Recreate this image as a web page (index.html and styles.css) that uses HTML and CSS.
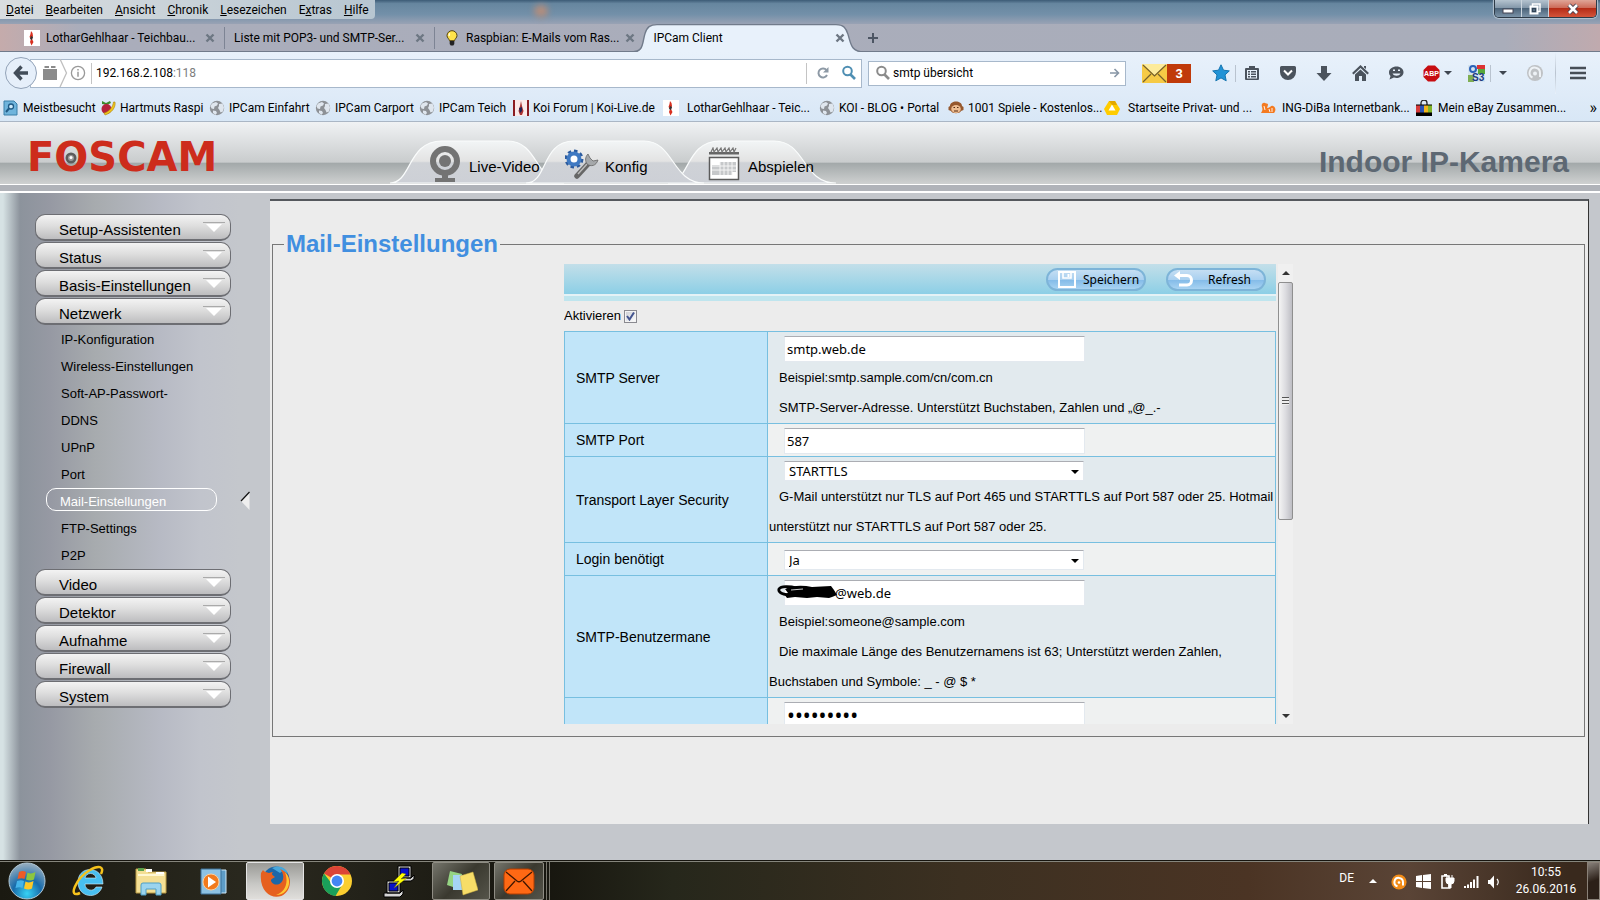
FILE: index.html
```html
<!DOCTYPE html>
<html lang="de">
<head>
<meta charset="utf-8">
<title>IPCam Client</title>
<link rel="stylesheet" href="styles.css">
</head>
<body>
<svg class="defs" aria-hidden="true">
  <symbol id="globe" viewBox="0 0 16 16"><circle cx="8" cy="8" r="7.200" fill="#8d9196"/><path d="M3 3.500 7 2l2 1.500-1 2-2.500 1L5 9l-2.500-.5L1.500 6zM10 4l3.500-.5 1.500 4-1 4-2.500 1-1-2.500-1.500-2 1-2zM4 10.500l3 .5 1 2-1.500 1.800L4 13z" fill="#dfe6ee"/></symbol>
  <symbol id="close" viewBox="0 0 10 10"><path d="M1.500 1.500l7 7M8.500 1.500l-7 7" stroke="#6d7783" stroke-width="2.400"/></symbol>
  <symbol id="koi" viewBox="0 0 16 16"><path fill="#fff" d="M0 0h16v16H0z"/><path d="M7 1l1.500 2 .5 3-1 3 1.500 3-2 3.500L6 12l1-3-1.500-2 1-3z" fill="#d83020"/><path d="M7 6l2 1-1 3-2-1z" fill="#333"/></symbol>
  <symbol id="lens" viewBox="0 0 16 16"><circle cx="6.500" cy="6" r="4.300" fill="none" stroke="currentColor" stroke-width="2"/><path d="M9.500 9.500l4.500 4.500" stroke="currentColor" stroke-width="2.600"/></symbol>
  <symbol id="drop" viewBox="0 0 22 12"><path d="M0 .5h22" stroke="#aaa"/><path d="M3 2h16l-8 8z" fill="#fff"/></symbol>
</svg>

<header class="browser">
  <div class="titlebar">
    <nav class="menubar" aria-label="Menü">
      <a href="#"><u>D</u>atei</a><a href="#"><u>B</u>earbeiten</a><a href="#"><u>A</u>nsicht</a><a href="#"><u>C</u>hronik</a><a href="#"><u>L</u>esezeichen</a><a href="#">E<u>x</u>tras</a><a href="#"><u>H</u>ilfe</a>
    </nav>
    <span class="glow"></span>
    <div class="winbtns">
      <button class="wb-min" aria-label="Minimieren"><svg width="12" height="12"><rect x="1" y="6" width="10" height="4" fill="#fff" stroke="#445"/></svg></button>
      <button class="wb-max" aria-label="Wiederherstellen"><svg width="12" height="12" fill="none"><path d="M3.500 3V1h7.500v7.500H9" stroke="#fff" stroke-width="1.500"/><rect x="1.500" y="3.500" width="7" height="7" stroke="#fff" stroke-width="2"/><rect x="3.500" y="5.500" width="3" height="3" stroke="#345"/></svg></button>
      <button class="wb-close" aria-label="Schließen"><svg width="14" height="12"><path d="M3 2l8 8M11 2l-8 8" stroke="#454050" stroke-width="4.500"/><path d="M3 2l8 8M11 2l-8 8" stroke="#fff" stroke-width="2.600"/></svg></button>
    </div>
  </div>

  <div class="tabs">
    <div class="tab"><svg class="i16"><use href="#koi"/></svg><span>LotharGehlhaar - Teichbau...</span><button aria-label="Tab schließen"><svg class="i10"><use href="#close"/></svg></button></div>
    <div class="tab"><span>Liste mit POP3- und SMTP-Ser...</span><button aria-label="Tab schließen"><svg class="i10"><use href="#close"/></svg></button></div>
    <div class="tab last"><svg class="i16" viewBox="0 0 16 16"><path d="M8 .7a5 5 0 0 0-5 5c0 2 2.200 3.200 2.500 5h5c.3-1.800 2.500-3 2.500-5a5 5 0 0 0-5-5z" fill="#ffe34a" stroke="#55430c"/><path d="M6 3.500c-1 .6-1 1.800-.8 2.500" stroke="#fff" fill="none" stroke-width="1.300"/><path d="M5.700 11h4.600v3l-1 1.500H6.700l-1-1.500z" fill="#222"/></svg><span>Raspbian: E-Mails vom Ras...</span><button aria-label="Tab schließen"><svg class="i10"><use href="#close"/></svg></button></div>
    <div class="tab active"><svg class="tabshape" viewBox="0 0 236 30" preserveAspectRatio="none"><path d="M0 29.500C12 29.500 10 20 13 10 15 3 18 .7 25 .7H204c8 0 10 4 12 10 3 10 3 18.800 16 18.800h4V30H0z" fill="#e8f1fb"/><path d="M0 28.800C12 28.800 10 20 13 10 15 3 18 .7 25 .7H204c8 0 10 4 12 10 3 10 3 18.100 16 18.100h4" fill="none" stroke="#717b8b" stroke-width="1.400"/></svg><span>IPCam Client</span><button aria-label="Tab schließen"><svg class="i10"><use href="#close"/></svg></button></div>
    <button class="newtab" aria-label="Neuer Tab"><svg width="12" height="12"><path d="M6 1v10M1 6h10" stroke="#4c5563" stroke-width="2"/></svg></button>
  </div>

  <div class="toolbar">
    <button class="back" aria-label="Zurück"><svg width="16" height="16" viewBox="0 0 16 16"><path d="M8.500 1.500L2.500 8l6 6.500M3 8h12" fill="none" stroke="#424d59" stroke-width="3.400"/></svg></button>
    <div class="url">
      <svg width="54" height="28" viewBox="0 0 54 28" aria-hidden="true"><path d="M5 10h14v11H5zM6.500 7H11v2H6.500zM13 7h4.500v2H13z" fill="#8b8b8b"/><path d="M22 0l6.500 14L22 28" fill="none" stroke="#bfbfbf" stroke-width="1.300"/><circle cx="40" cy="14" r="6.600" fill="none" stroke="#999" stroke-width="1.300"/><path d="M40 12.800v5M40 10v1.500" stroke="#999" stroke-width="1.500"/><path d="M53.500 4v21" stroke="#c4c4c4"/></svg>
      <a href="#" class="address">192.168.2.108<i>:118</i></a>
      <button class="reload" aria-label="Neu laden"><svg width="14" height="14" viewBox="0 0 14 14"><path d="M10.500 4.200A4.500 4.500 0 1 0 11 9" fill="none" stroke="#8d99a5" stroke-width="2"/><path d="M12.500 1v5.500H7z" fill="#8d99a5"/></svg></button>
      <button class="go" aria-label="Suchen"><svg class="i16"><use href="#lens"/></svg></button>
    </div>
    <div class="search">
      <svg class="i16"><use href="#lens"/></svg>
      <input type="text" aria-label="Suche" value="smtp übersicht">
      <svg width="10" height="10" viewBox="0 0 10 10"><path d="M0 5h8M4.500 1l4 4-4 4" fill="none" stroke="#8896a6" stroke-width="1.600"/></svg>
    </div>
    <button class="mail" aria-label="3 neue Nachrichten"><svg width="25" height="19" viewBox="0 0 25 19"><path fill="#f6ca45" d="M0 0h25v19H0z"/><path fill="#fdeb9b" d="M0 0h25L12.500 11z"/><path d="M1 1l11.500 11L24 1M1 18l8-8M24 18l-8-8" fill="none" stroke="#74602c" stroke-width="1.200"/></svg><b>3</b></button>
    <button class="tb star" aria-label="Lesezeichen"><svg width="18" height="18" viewBox="0 0 18 18"><path d="M9 .8l2.500 5.400 5.800.7-4.300 4 1.200 5.900L9 13.900l-5.200 2.900L5 10.900l-4.300-4 5.800-.7z" fill="#2193d6" stroke="#1675b0"/></svg></button>
    <span class="sep"></span>
    <button class="tb clip" aria-label="Lesezeichenliste"><svg width="16" height="16" viewBox="0 0 16 16"><path d="M2 3h3V1h6v2h3a1 1 0 0 1 1 1v10a1 1 0 0 1-1 1H2a1 1 0 0 1-1-1V4a1 1 0 0 1 1-1z" fill="#4b535d"/><path d="M3 5h10v8.500H3z" fill="#e8f1fb"/><path d="M4 6h2v1.500H4zm3 0h5v1.500H7zM4 8.500h2V10H4zm3 0h5V10H7zM4 11h2v1.500H4zm3 0h5v1.500H7z" fill="#4b535d"/></svg></button>
    <button class="tb" aria-label="Pocket"><svg width="18" height="16" viewBox="0 0 18 16"><path d="M2.500 1h13a1.500 1.500 0 0 1 1.500 1.500V7a8 8 0 0 1-16 0V2.500A1.500 1.500 0 0 1 2.500 1z" fill="#4b535d"/><path d="M5 5.500l4 4 4-4" fill="none" stroke="#fff" stroke-width="2"/></svg></button>
    <button class="tb" aria-label="Downloads"><svg width="16" height="17" viewBox="0 0 16 17"><path d="M5 1h6v7h4.500L8 16 .5 8H5z" fill="#4b535d"/></svg></button>
    <button class="tb" aria-label="Startseite"><svg width="17" height="16" viewBox="0 0 17 16"><path d="M.8 8.800L8.500 1.500l7.700 7.300" fill="none" stroke="#4b535d" stroke-width="2.200"/><path d="M12 1h2v3l-2-1.500zM3 9.500L8.500 4.500 14 9.500V16h-4v-5H7v5H3z" fill="#4b535d"/></svg></button>
    <button class="tb" aria-label="Chat"><svg width="16" height="16" viewBox="0 0 16 16"><path d="M8.500 1.500c4 0 7 2.500 7 5.700s-3 5.800-7 5.800c-1 0-1.800-.1-2.600-.4L1.500 14.500l1-3.500C1.500 10 1 8.900 1 7.200c0-3.200 3.500-5.700 7.500-5.700z" fill="#4b535d"/><path d="M5 4.500h2V6H5zM10 4.500h2V6h-2z" fill="#e8f1fb"/><path d="M4.500 8.500c1.500 3 6.500 3 8 0z" fill="#e8f1fb"/></svg></button>
    <button class="tb abp" aria-label="Adblock Plus"><svg width="17" height="17" viewBox="0 0 17 17"><path d="M5 .5h7L16.500 5v7L12 16.500H5L.5 12V5z" fill="#c70d11"/><text x="8.500" y="11.400" text-anchor="middle" class="abptxt">ABP</text></svg></button>
    <span class="caret"></span>
    <button class="tb s3" aria-label="Google S3 Übersetzer"><svg width="17" height="17" viewBox="0 0 17 17"><path fill="#d5e3ef" d="M0 0h17v17H0z"/><path d="M9 0h8v4H9z" fill="#d33"/><path d="M10 4h7v5h-7z" fill="#57a73a"/><path d="M0 10h6v7H0z" fill="#7fae52"/><circle cx="5" cy="4" r="3" fill="none" stroke="#2b62b8" stroke-width="2"/><text x="4" y="16" class="s3txt">S3</text></svg></button>
    <span class="sep"></span>
    <span class="caret wide"></span>
    <button class="tb at" aria-label="Avast"><svg width="18" height="18" viewBox="0 0 18 18"><circle cx="9" cy="9" r="8" fill="#bfc2c5"/><path d="M6.500 13.500A5.200 5.200 0 1 1 14 9v4" fill="none" stroke="#eef2f6" stroke-width="2"/><circle cx="9" cy="9.500" r="2" fill="#eef2f6"/></svg></button>
    <span class="sep tall"></span>
    <button class="tb burger" aria-label="Menü öffnen"><svg width="16" height="14"><path d="M0 2h16M0 7h16M0 12h16" stroke="#474e57" stroke-width="2.600"/></svg></button>
  </div>

  <nav class="bookmarks" aria-label="Lesezeichen">
    <a href="#" class="b97"><svg class="i16" viewBox="0 0 16 16"><path d="M1 1h10l3 3v11H1z" fill="#6fb4dc" stroke="#3b7fa8"/><circle cx="8" cy="6.500" r="2.500" fill="#cdeaf9" stroke="#205a85" stroke-width="1.300"/><path d="M6 8.500L3 12" stroke="#205a85" stroke-width="2"/></svg><span>Meistbesucht</span></a>
    <a href="#" class="b109"><svg class="i16" viewBox="0 0 16 16"><path d="M2 1l4 2 4-2 1 2-4 2-5-1z" fill="#3d8a2b"/><circle cx="6.500" cy="9" r="5" fill="#b5213c"/><path d="M15 2c1 5-3 11-10 13l-1-2c5-1 9-6 9.500-11z" fill="#f0c51d" stroke="#a8820b" stroke-width=".6"/></svg><span>Hartmuts Raspi</span></a>
    <a href="#" class="b106"><svg class="i16"><use href="#globe"/></svg><span>IPCam Einfahrt</span></a>
    <a href="#" class="b104"><svg class="i16"><use href="#globe"/></svg><span>IPCam Carport</span></a>
    <a href="#" class="b94"><svg class="i16"><use href="#globe"/></svg><span>IPCam Teich</span></a>
    <a href="#" class="b150"><svg class="i16" viewBox="0 0 16 16"><path fill="#fbe9e9" d="M0 0h16v16H0z"/><path fill="#8b1c22" d="M0 0h2v16H0zM14 0h2v16h-2z"/><path d="M8 1l1 5 1.500 5L9 15H7l-1.500-4L7 6z" fill="#a33"/><path d="M6 8l3-1v4l-2 2z" fill="#225"/></svg><span>Koi Forum | Koi-Live.de</span></a>
    <a href="#" class="b156 g8"><svg class="i16"><use href="#koi"/></svg><span>LotharGehlhaar - Teic...</span></a>
    <a href="#" class="b129"><svg class="i16"><use href="#globe"/></svg><span>KOI - BLOG • Portal</span></a>
    <a href="#" class="b156"><svg class="i16" viewBox="0 0 16 16"><path d="M2 6c0-3 3-4.500 6-4.500S14 3 14 6l1.500 1v3L13 11c-1 3-9 3-10 0L.5 10V7z" fill="#96582d"/><ellipse cx="8" cy="9" rx="4.800" ry="4" fill="#eebd91"/><path d="M5.500 7.500h1.500M9 7.500h1.500M6 11h4" stroke="#532b12" stroke-width="1.200"/></svg><span>1001 Spiele - Kostenlos...</span></a>
    <a href="#" class="b156 g8"><svg class="i16" viewBox="0 0 16 16"><path d="M5 1h6l5 8-3 6H3L0 9z" fill="#fc0"/><path d="M8 4.500l3.500 6h-7z" fill="#fff"/><path d="M5 1h6l2 4H8z" fill="#e3a800"/></svg><span>Startseite Privat- und ...</span></a>
    <a href="#" class="b156 g6"><svg class="i16" viewBox="0 0 16 16"><path d="M1 13c1-2 2-3 1-6-1-3 1-5 3-4s3 0 3 2l-1 3c3 0 4-3 6-2 3 1 3 5 1 7z" fill="#f47a20"/><path d="M4 6l1 4M9 9l1 3M12 8v4" stroke="#fff" stroke-width=".9"/></svg><span>ING-DiBa Internetbank...</span></a>
    <a href="#" class="b171 g6"><svg class="i16" viewBox="0 0 16 16"><path d="M5 5V3a3 3 0 0 1 6 0v2" fill="none" stroke="#222" stroke-width="1.300"/><path d="M0 5h4v8H0z" fill="#d63a3a"/><path d="M4 5h4v8H4z" fill="#2a52b5"/><path d="M8 5h4v8H8z" fill="#f0b41c"/><path d="M12 5h4v8h-4z" fill="#80b52a"/><path d="M0 4.500h16v1H0zM0 12.500h16V16H0z"/></svg><span>Mein eBay Zusammen...</span></a>
    <button class="more" aria-label="Weitere Lesezeichen">»</button>
  </nav>
</header>

<div class="page">
  <header class="camhead">
    <a href="#" class="logo" aria-label="FOSCAM">F<span class="eyeo">O<svg viewBox="0 0 12 12"><circle cx="6" cy="6" r="5.500" fill="#5c5c5c"/><circle cx="6" cy="6" r="3" fill="#999"/><circle cx="6" cy="5.500" r="1.500" fill="#fff"/></svg></span>SCAM</a>
    <nav class="camnav" aria-label="Kamera">
      <svg class="tabsbg" viewBox="0 0 450 44" preserveAspectRatio="none" aria-hidden="true">
        <defs><linearGradient id="tg" x1="0" y1="0" x2="0" y2="1"><stop offset="0" stop-color="#f2f5f6"/><stop offset=".48" stop-color="#e3e3e3"/><stop offset=".52" stop-color="#cfd2d7"/><stop offset="1" stop-color="#cdd0d6"/></linearGradient></defs>
        <g fill="url(#tg)" stroke="#fafcfc" stroke-width="1.200">
          <path d="M0 43C22 43 17 1 52 1h66c30 0 28 42 56 42z"/>
          <path d="M278 43C300 43 295 1 330 1h54c32 0 28 42 62 42z"/>
          <path d="M136 43C158 43 151 1 184 1h70c30 0 28 42 60 42z"/>
        </g>
      </svg>
      <a href="#" class="n1"><svg width="32" height="38" viewBox="0 0 32 38"><circle cx="16" cy="16" r="12" fill="none" stroke="#737373" stroke-width="6"/><circle cx="16" cy="16" r="6" fill="#737373"/><path d="M13 29h6v4h7v4H6v-4h7z" fill="#737373"/></svg><span>Live-Video</span></a>
      <a href="#" class="n2"><svg width="34" height="30" viewBox="0 0 34 30"><circle cx="9" cy="10" r="8.200" fill="none" stroke="#2c5b9e" stroke-width="2.500" stroke-dasharray="3.500 2.900"/><circle cx="9" cy="10" r="5.500" fill="#fff" stroke="#3f79c2" stroke-width="4"/><path d="M12 27L23 15" stroke="#666" stroke-width="5.500" stroke-linecap="round"/><path d="M13 25l9-10" stroke="#bbb" stroke-width="1.500"/><path d="M23 5c-3 3-3 7-1 10 4 3 9 2 11-4l-5 1-3-3z" fill="#a5a8ab" stroke="#666" stroke-width=".8"/></svg><span>Konfig</span></a>
      <a href="#" class="n3"><svg width="32" height="34" viewBox="0 0 32 34"><path d="M1.500 10.500h29v22h-29z" fill="#fff" stroke="#5b5b5b" stroke-width="1.500"/><path d="M1 5h30v2.500H1z" fill="#666"/><path d="M3 5l2-4 1 4 3-4 1 4 3-4 1 4 3-4 1 4 3-4 1 4 3-4 1 4 2-4" fill="none" stroke="#777" stroke-width="1.200"/><path d="M12 15h16v10H12zM4 18h8v10H4zM12 24h12v4H12z" fill="#c6c8ca"/><path d="M12 15v13M16 15v13M20 15v13M24 15v13M4 19h24M4 23h24" stroke="#f5f5f5"/></svg><span>Abspielen</span></a>
    </nav>
    <h1>Indoor IP-Kamera</h1>
  </header>

  <div class="body">
    <aside class="side">
      <button class="grp">Setup-Assistenten<svg><use href="#drop"/></svg></button>
      <button class="grp">Status<svg><use href="#drop"/></svg></button>
      <button class="grp">Basis-Einstellungen<svg><use href="#drop"/></svg></button>
      <button class="grp">Netzwerk<svg><use href="#drop"/></svg></button>
      <ul>
        <li><a href="#">IP-Konfiguration</a></li>
        <li><a href="#">Wireless-Einstellungen</a></li>
        <li><a href="#">Soft-AP-Passwort-</a></li>
        <li><a href="#">DDNS</a></li>
        <li><a href="#">UPnP</a></li>
        <li><a href="#">Port</a></li>
        <li class="sel"><a href="#">Mail-Einstellungen</a><svg width="10" height="20" viewBox="0 0 10 20"><path d="M9.500 1v18L1 10z" fill="#eee"/><path d="M9.500 1L1 10" stroke="#111" stroke-width="1.200"/></svg></li>
        <li><a href="#">FTP-Settings</a></li>
        <li><a href="#">P2P</a></li>
      </ul>
      <button class="grp">Video<svg><use href="#drop"/></svg></button>
      <button class="grp">Detektor<svg><use href="#drop"/></svg></button>
      <button class="grp">Aufnahme<svg><use href="#drop"/></svg></button>
      <button class="grp">Firewall<svg><use href="#drop"/></svg></button>
      <button class="grp">System<svg><use href="#drop"/></svg></button>
    </aside>

    <main class="panel">
      <fieldset>
        <legend>Mail-Einstellungen</legend>
        <div class="frame">
          <form class="view">
            <div class="actions">
              <button type="button" class="act"><svg width="18" height="17" viewBox="0 0 18 17"><path d="M1 1h16v15H1z" fill="none" stroke="#fff" stroke-width="2"/><path d="M5 1h8v6H5z" fill="none" stroke="#fff" stroke-width="1.600"/><path d="M9.500 3h2v3h-2z" fill="#fff"/></svg>Speichern</button>
              <button type="button" class="act refresh"><svg width="20" height="17" viewBox="0 0 20 17"><path d="M4 4.500h9c6 0 6 9.500 0 9.500H5" fill="none" stroke="#fff" stroke-width="3"/><path d="M0 4.500L6 0v9z" fill="#fff"/></svg>Refresh</button>
            </div>
            <div class="rule"></div>
            <div class="enable"><label for="en">Aktivieren</label><input type="checkbox" id="en" checked><svg width="9" height="9" viewBox="0 0 9 9"><path d="M1 4l2.500 3.500L8 .5" fill="none" stroke="#43548f" stroke-width="2"/></svg></div>
            <table>
              <tr class="r92"><th scope="row"><label for="srv">SMTP Server</label></th><td><input type="text" id="srv" value="smtp.web.de"><p>Beispiel:smtp.sample.com/cn/com.cn</p><p>SMTP-Server-Adresse. Unterstützt Buchstaben, Zahlen und „@_.-</p></td></tr>
              <tr class="r33 alt"><th scope="row"><label for="port">SMTP Port</label></th><td><input type="text" id="port" value="587"></td></tr>
              <tr class="r86"><th scope="row"><label for="tls">Transport Layer Security</label></th><td><div class="sel-wrap"><select id="tls"><option>STARTTLS</option><option>TLS</option></select></div><p>G-Mail unterstützt nur TLS auf Port 465 und STARTTLS auf Port 587 oder 25. Hotmail<br>unterstützt nur STARTTLS auf Port 587 oder 25.</p></td></tr>
              <tr class="r33 alt login"><th scope="row"><label for="login">Login benötigt</label></th><td><div class="sel-wrap"><select id="login"><option>Ja</option><option>Nein</option></select></div></td></tr>
              <tr class="r122"><th scope="row"><label for="usr">SMTP-Benutzermane</label></th><td><div class="hidden-name"><input type="text" id="usr" value="@web.de"><svg width="60" height="14" viewBox="0 0 60 14"><path d="M12 10C4 9 1 7 2 4c2-3 10-3 18-1" fill="none" stroke="#000" stroke-width="2.800"/><path d="M8 4c8-4 18-4 27-2l19-1 3 4 3 5-5 2-3 1-12-1-10 1-12-1-8 1-3-4 4-1z"/><path d="M14 5l12-1" stroke="#fff" stroke-width=".8"/></svg></div><p>Beispiel:someone@sample.com</p><p>Die maximale Länge des Benutzernamens ist 63; Unterstützt werden Zahlen,<br>Buchstaben und Symbole: _ - @ $ *</p></td></tr>
              <tr class="r92 alt"><th scope="row"><label for="pw" class="unseen">Passwort</label></th><td><input type="password" id="pw" value="123456789"></td></tr>
            </table>
          </form>
          <div class="scroll" aria-hidden="true"><i class="up"></i><span class="thumb"><b></b></span><i class="down"></i></div>
        </div>
      </fieldset>
    </main>
  </div>
</div>

<footer class="taskbar">
  <button class="start" aria-label="Start"><svg width="40" height="40" viewBox="0 0 40 40"><defs><radialGradient id="orb" cx=".5" cy=".85" r=".8"><stop offset="0" stop-color="#37d2f5"/><stop offset=".5" stop-color="#186bab"/><stop offset="1" stop-color="#8fa9bd"/></radialGradient></defs><circle cx="20" cy="20" r="18" fill="url(#orb)" stroke="#b3c9d6"/><path d="M12 11c3-1.500 5-1 7 0l-1.500 7c-2-1-4-1-7 0z" fill="#ee5b26"/><path d="M20.500 11.500c3 1.500 5 1 8-.5L27 18.500c-3 1.500-5 1-8 0z" fill="#8cc63e"/><path d="M10 20c3-1 5-1 7 0l-1.500 7c-2-1-4-1-7 0z" fill="#45b4ea"/><path d="M18.500 20.500c3 1.500 5 1 8-.5L25 27.500c-3 1.500-5 1-8 0z" fill="#fdc827"/></svg></button>
  <button class="task" aria-label="Internet Explorer"><svg width="34" height="34" viewBox="0 0 34 34"><path d="M31 20H13c0 7 9 8 11 3h6c-4 13-24 11-24-5C6 1 31 1 31 20zM13 14h11c-1-6-10-6-11 0z" fill="#48bff0" stroke="#d6f2ff" stroke-width=".6"/><path d="M8 29C-5 35 4 14 18 6c8-5 15-4 11 4" fill="none" stroke="#f5c21c" stroke-width="2.500"/></svg></button>
  <button class="task" aria-label="Explorer"><svg width="34" height="34" viewBox="0 0 34 34"><path d="M2 5h10l2 3h18v21H2z" fill="#f4df94" stroke="#b99a45"/><path d="M4 4h6v3H4z" fill="#5aa04a"/><path d="M12 5h6v3h-6zM22 8h8v2h-8z" fill="#fff"/><path d="M4 11h26" stroke="#fff7d2" stroke-width="2"/><path d="M7 31V21q0-2 2-2h16q2 0 2 2v10h-5v-6H12v6z" fill="#9bd4ee" stroke="#4f9fc6"/></svg></button>
  <button class="task" aria-label="Media Player"><svg width="34" height="34" viewBox="0 0 34 34"><path d="M24 6h6v23h-6z" fill="#5d9cc7" stroke="#cfe8f7"/><path d="M5 5h20v25H5z" fill="#8dc2e3" stroke="#3c7199"/><circle cx="15" cy="18" r="8" fill="#f17a1c" stroke="#fbcf9d"/><path d="M12 12.500l8 5.500-8 5.500z" fill="#fff"/></svg></button>
  <button class="task on" aria-label="Firefox"><svg width="34" height="34" viewBox="0 0 34 34"><circle cx="18" cy="16" r="13.500" fill="#1d67a8"/><path d="M14 4c7-4 15 0 16 6-4-3-6-3-8-1z" fill="#48a7db"/><path d="M3 9l2-3c1 2 4 2 6 3 2-1 4-1 4-1-2 2-1 3 2 5-2 2-4 1-4 4 3 6 11 4 12-2 1-4-1-8-3-10 6 2 10 8 10 13C31 40 0 38 3 9z" fill="#e6601f"/><path d="M27 8c8 8 4 23-9 23 9-3 13-12 9-23z" fill="#ffc832"/></svg></button>
  <button class="task" aria-label="Chrome"><svg width="34" height="34" viewBox="0 0 34 34"><circle cx="17" cy="17" r="15" fill="#fbce30"/><path d="M17 17L4 9.500A15 15 0 0 1 30.500 10.500H17z" fill="#dc4437"/><path d="M4 9.500A15 15 0 0 0 15.500 32L22 21l-10-1z" fill="#1a9f5a"/><circle cx="17" cy="17" r="7" fill="#fff"/><circle cx="17" cy="17" r="5.400" fill="#4385f3"/></svg></button>
  <button class="task" aria-label="PuTTY"><svg width="34" height="34" viewBox="0 0 34 34"><g fill="#d5d5d5" stroke="#000"><path d="M16 2h13v12H16zM15 14h14l3-3v4l-3 2H15zM5 17h13v12H5zM2 29h16l3-3v4l-3 3H2z"/><path d="M18 4h9v8h-9zM7 19h9v8H7z" fill="#0810c8"/></g><path d="M20 9l-9 9 6-1-5 7 13-10-6 1 5-5z" fill="#ff0" stroke="#660" stroke-width=".4"/></svg></button>
  <button class="task open" aria-label="Notizzettel"><svg width="34" height="34" viewBox="0 0 34 34"><path d="M6 7l12 3-3 15-12-4z" fill="#95d483"/><path d="M9 11h13v15H9z" fill="#a5d4f4"/><path d="M16 12l13-4 5 18-15 5z" fill="#f7dd68" stroke="#c9ab3e" stroke-width=".5"/></svg></button>
  <button class="task open stack" aria-label="E-Mail"><svg width="34" height="34" viewBox="0 0 34 34"><rect x="2" y="5" width="30" height="25" rx="6" fill="#ff6814" stroke="#b33d00"/><path d="M4 8l11 9q2 1.500 4 0L30 8M4 27l9-10M30 27l-9-10" fill="none" stroke="#401600" stroke-width="1.300"/></svg></button>
  <span class="edge"></span><span class="edge"></span>
  <div class="tray">
    <span class="lang">DE</span>
    <i class="tri"></i>
    <svg width="16" height="16" viewBox="0 0 16 16"><circle cx="8" cy="8" r="7.600" fill="#f28c18"/><path d="M6.500 12.300A4.300 4.300 0 1 1 12 8v3.500" fill="none" stroke="#fff" stroke-width="2"/><circle cx="8" cy="8.500" r="1.300" fill="#fff"/></svg>
    <svg width="15" height="15" viewBox="0 0 15 15"><path d="M0 2l6-1v6H0zM7 1l8-1v7H7zM0 8h6v6l-6-1zM7 8h8v7l-8-1z" fill="#fff"/></svg>
    <svg width="15" height="15" viewBox="0 0 15 15"><path d="M2 2h7v12H2zM4 .5h3" fill="none" stroke="#fff" stroke-width="1.600"/><path d="M6 4h8v3q0 3-3 3v4H9v-4q-3 0-3-3zM7 1v3M12 1v3" fill="#fff" stroke="#fff"/></svg>
    <svg width="15" height="12" viewBox="0 0 15 12"><path d="M0 10h2v2H0zM3 8.500h2V12H3zM6 6h2v6H6zM9 3.500h2V12H9zM12.500 0h2v12h-2z" fill="#fff"/></svg>
    <svg width="13" height="14" viewBox="0 0 13 14"><path d="M0 5h2l4-4.500v13L2 9H0z" fill="#fff"/><path d="M9 4q2.500 3 0 6" fill="none" stroke="#fff" stroke-width="1.200"/></svg>
    <time>10:55<br>26.06.2016</time>
    <button class="desk" aria-label="Desktop anzeigen"></button>
  </div>
</footer>
</body>
</html>
```

FILE: styles.css
```css
* { box-sizing: border-box; }
body {
  margin: 0;
  min-height: 100vh;
  display: flex;
  flex-direction: column;
  font: 12px/16px Roboto, "Noto Sans", sans-serif;
  color: #000;
}
a { color: inherit; text-decoration: none; }
button {
  margin: 0;
  padding: 0;
  border: 0;
  background: none;
  font: inherit;
  color: inherit;
}
svg { display: block; flex: none; }
.defs { position: absolute; width: 0; height: 0; }
.i16 { width: 16px; height: 16px; }
.i10 { width: 10px; height: 10px; }

/* Browser window */
.browser { background: #a9adba; }
.titlebar {
  position: relative;
  display: flex;
  justify-content: space-between;
  height: 24px;
  background: linear-gradient(#3c5b76, #66869f 15%, #7390a9 60%, #99a2b4);
}
.menubar {
  display: flex;
  gap: 12px;
  height: 19px;
  padding: 2px 6px;
  border-radius: 0 0 4px 0;
  background: linear-gradient(90deg, #d9dddf, #b7c6d1);
  white-space: nowrap;
}
.glow {
  position: absolute;
  left: 534px;
  top: 5px;
  width: 14px;
  height: 12px;
  border-radius: 6px;
  background: #b38d7c;
  filter: blur(3px);
}
.winbtns {
  display: flex;
  height: 18px;
  margin-right: 3px;
  border: 1px solid #2d3a47;
  border-top: 0;
  border-radius: 0 0 5px 5px;
  overflow: hidden;
  box-shadow: 0 0 1px 1px #b5c4d1;
}
.winbtns button {
  display: grid;
  place-items: center;
  width: 27px;
  background: linear-gradient(#b5c3cf, #8498aa 45%, #4c647a 50%, #7b93a8);
  border-right: 1px solid #cbd5de;
}
.winbtns .wb-close {
  width: 47px;
  border: 0;
  background: linear-gradient(#dfa598, #cd6c5a 45%, #b52c17 50%, #d4543a);
}

.tabs {
  display: flex;
  height: 28px;
  padding-left: 14px;
  border-bottom: 1px solid #717b8b;
  background: linear-gradient(90deg, #c5abab, #aaadbb 80px, #a9adba 94%, #c0aaae);
}
.tab {
  position: relative;
  display: flex;
  align-items: center;
  gap: 6px;
  flex: 0 1 210px;
  padding: 0 9px 0 10px;
  white-space: nowrap;
}
.tab span { flex: 1; position: relative; }
.tab + .tab:not(.active)::before {
  content: "";
  position: absolute;
  left: 0;
  top: 3px;
  height: 22px;
  border-left: 1px solid #7d8494;
}
.tab.active { flex-basis: 218px; padding: 0 17px 0 9px; }
.tab.active button { position: relative; }
.tabshape { position: absolute; left: -12px; top: 0; width: 236px; height: 29px; }
.newtab { width: 22px; display: grid; place-items: center; }

.toolbar {
  position: relative;
  display: flex;
  align-items: center;
  height: 42px;
  padding: 0 8px 0 5px;
  background: linear-gradient(#e8f1fb, #dfebf8);
}
.back {
  position: relative;
  z-index: 1;
  display: grid;
  place-items: center;
  width: 32px;
  height: 32px;
  margin-right: -7px;
  border: 1px solid #93a3b8;
  border-radius: 50%;
  background: #e6effa;
}
.url, .search {
  display: flex;
  align-items: center;
  background: #fff;
  border: 1px solid #a7b8cb;
}
.url { flex: 1; height: 29px; padding-left: 7px; }
.address { flex: 1; padding-left: 4px; }
.address i { font-style: normal; color: #7d7d7d; }
.reload {
  display: grid;
  place-items: center;
  width: 32px;
  height: 21px;
  border-left: 1px solid #c4c4c4;
}
.go { color: #4f8fb3; margin: 0 4px 0 3px; }
.search { width: 258px; height: 25px; margin-left: 6px; padding: 0 5px 0 6px; color: #8b8b8b; }
.search input {
  flex: 1;
  min-width: 0;
  padding: 0 2px;
  border: 0;
  background: none;
  font: inherit;
  color: #000;
}
.mail { display: flex; margin-left: 16px; }
.mail b {
  width: 24px;
  background: #c03a0a;
  color: #fff;
  font: bold 13px/19px "Liberation Sans", sans-serif;
}
.tb { display: grid; place-items: center; flex: none; width: 28px; height: 28px; margin-left: 8px; }
.tb.star { margin-left: 16px; }
.tb.clip { margin-left: 2px; }
.tb.s3 { margin-left: 10px; }
.tb.at { margin-left: 14px; }
.tb.abp { width: 25px; margin-left: 9px; }
.sep { flex: none; width: 1px; height: 17px; background: #b9c3cf; }
.sep.tall { height: 42px; margin-left: 6px; background: linear-gradient(#e8f1fb, #b9c3cf, #e8f1fb); }
.caret {
  flex: none;
  border: 4px solid transparent;
  border-top-color: #3f4650;
  border-bottom: 0;
}
.caret.wide { margin-left: 8px; }
.abptxt { font: bold 7px "Liberation Sans", sans-serif; fill: #fff; }
.s3txt { font: bold 10px "Liberation Sans", sans-serif; fill: #1c3a80; }

.bookmarks {
  display: flex;
  align-items: center;
  height: 28px;
  padding: 0 3px;
  border-bottom: 1px solid #aab6c5;
  background: linear-gradient(#dfebf8, #d8e7f6);
  white-space: nowrap;
}
.bookmarks a { display: flex; align-items: center; gap: 4px; flex: 0 1 auto; }
.bookmarks .g8 { gap: 8px; }
.bookmarks .g6 { gap: 6px; }
.b94 { width: 94px; }
.b97 { width: 97px; }
.b104 { width: 104px; }
.b106 { width: 106px; }
.b109 { width: 109px; }
.b129 { width: 129px; }
.b150 { width: 150px; }
.b156 { width: 156px; }
.b171 { width: 171px; }
.more { margin-left: auto; font-size: 16px; }

/* Camera page */
.page {
  flex: 1;
  display: flex;
  flex-direction: column;
  background: #c4c7cc;
  font-family: "Liberation Sans", Arial, sans-serif;
}
.camhead {
  position: relative;
  display: flex;
  align-items: center;
  height: 62px;
  padding: 0 31px 0 27px;
  background: linear-gradient(#f0f2f4, #c9cccd 65%, #a2a8a9 66%, #cfd1d1);
}
.logo {
  width: 363px;
  padding-top: 8px;
  color: #cd2c1c;
  font: bold 40px/40px "DejaVu Sans", sans-serif;
}
.eyeo { position: relative; }
.eyeo svg { position: absolute; left: 11px; top: 18px; width: 12px; height: 12px; }
.camnav {
  position: relative;
  display: flex;
  align-self: flex-end;
  width: 450px;
  height: 44px;
  font-size: 15px;
}
.tabsbg { position: absolute; left: 0; top: 0; width: 450px; height: 44px; }
.camnav a { position: relative; display: flex; align-items: center; gap: 8px; padding-top: 4px; white-space: nowrap; }
.camnav span { padding-top: 6px; }
.camnav .n1 { width: 175px; padding-left: 39px; }
.camnav .n2 { width: 143px; gap: 6px; }
.camhead h1 {
  margin: 0 0 0 auto;
  padding-top: 18px;
  font-size: 30px;
  line-height: 40px;
  color: #5d6873;
}
.body {
  flex: 1;
  display: flex;
  align-items: stretch;
  padding-right: 11px;
  border-top: 1px solid #fff;
  background:
    linear-gradient(#b0b3b9, #b0b3b9 6px, #fff 6px, #fff 8px, transparent 8px),
    linear-gradient(90deg, #d6e2e4 3px, #8c939c 20px, #9699a3 50px, #a7abae 95px, #b7bac4 160px, #c1c4cc 200px, #c4c7cc 240px);
}
.side { width: 270px; flex: none; padding: 29px 0 0 35px; }
.grp {
  display: flex;
  align-items: center;
  justify-content: space-between;
  width: 196px;
  height: 27px;
  margin-bottom: 1px;
  padding: 6px 5px 0 23px;
  border: 1px solid #6d6e73;
  border-width: 1px 1px 2px;
  border-radius: 10px;
  background: linear-gradient(#f3f3f3, #dedede 45%, #bdbdbf);
  font-size: 15px;
}
.grp svg { width: 22px; height: 12px; margin-bottom: 4px; }
.side ul { margin: 0; padding: 0; list-style: none; font-size: 13px; }
.side li { height: 27px; padding-left: 26px; line-height: 27px; }
.side .sel { display: flex; justify-content: space-between; padding: 0 20px 0 11px; }
.side .sel a {
  width: 171px;
  height: 23px;
  padding-left: 13px;
  border: 1px solid #fff;
  border-radius: 10px;
  line-height: 25px;
  color: #fff;
}
.sel svg { margin-top: 3px; }

.panel {
  flex: 1;
  margin: 14px 0 36px;
  padding: 29px 3px 0 2px;
  border-top: 2px solid #55585d;
  border-right: 1px solid #333;
  background: #ececec;
}
fieldset {
  min-width: 0;
  margin: 0;
  padding: 6px 0 12px;
  border: 1px solid #777;
}
legend {
  margin-left: 11px;
  padding: 0 2px;
  color: #418fe0;
  font: bold 24px/28px "Liberation Sans", Arial, sans-serif;
}
.frame { display: flex; gap: 2px; width: 729px; height: 460px; margin: 0 auto; }
.view { flex: 1; overflow: hidden; }
.actions {
  display: flex;
  justify-content: flex-end;
  gap: 20px;
  padding: 4px 10px;
  height: 30px;
  background: linear-gradient(#c3dfe9, #8ccfe6);
}
.act {
  display: flex;
  align-items: center;
  gap: 7px;
  width: 100px;
  height: 23px;
  padding: 0 5px 0 10px;
  border: 2px solid #7db4d8;
  border-radius: 12px;
  background: linear-gradient(#c5def3, #a9d0f0 50%, #83bbe8 52%, #a8d3f2);
  font: 12px/16px "Noto Sans", sans-serif;
}
.refresh { justify-content: space-between; padding: 0 13px 0 6px; }
.rule { height: 7px; border-top: 2px solid #e4f2f6; background: #bfe5ee; }
.enable {
  position: relative;
  display: flex;
  align-items: center;
  gap: 3px;
  height: 30px;
  font-size: 13px;
}
.enable input {
  appearance: none;
  width: 13px;
  height: 13px;
  margin: 0;
  border: 1px solid #8a8a90;
  background: linear-gradient(135deg, #c9ccd2, #fff);
  box-shadow: inset 0 0 0 1px #f4f4f4;
}
.enable svg { margin-left: -14px; position: relative; }
table { width: 100%; border-collapse: collapse; table-layout: fixed; }
th, td { border: 1px solid #77bfe0; padding: 0; }
th {
  width: 203px;
  padding-left: 11px;
  background: #c1e5f9;
  text-align: left;
  font-size: 14px;
  font-weight: normal;
}
td { padding: 4px 0 0 1px; vertical-align: top; background: #e2eaee; }
.alt td { background: #eff1f1; }
.login td { padding-top: 7px; }
.r33 { height: 33px; }
.r86 { height: 86px; }
.r92 { height: 92px; }
.r122 { height: 122px; }
td input, .sel-wrap {
  display: block;
  width: 301px;
  height: 26px;
  margin: 0 0 1px 15px;
  border: 1px solid #e3e9ef;
  border-top-color: #abadb3;
  background: #fff;
}
td input { padding: 0 2px; font: 13px/22px "Noto Sans", sans-serif; }
td input[type="password"] { font-size: 21px; }
.sel-wrap { position: relative; width: 300px; height: 20px; }
.sel-wrap::after {
  content: "";
  position: absolute;
  right: 4px;
  top: 8px;
  border: 4px solid transparent;
  border-top-color: #000;
  border-bottom: 0;
}
select {
  display: block;
  appearance: none;
  width: 100%;
  height: 18px;
  padding: 0 4px;
  border: 0;
  background: none;
  color: #000;
  font: 13px/18px "Noto Sans", sans-serif;
}
.hidden-name { position: relative; }
.hidden-name input { padding-left: 50px; }
.hidden-name svg { position: absolute; left: 8px; top: 5px; }
td p { margin: 0; text-indent: 10px; font-size: 13px; line-height: 30px; white-space: nowrap; }
.unseen { visibility: hidden; }
.scroll {
  display: flex;
  flex-direction: column;
  align-items: center;
  width: 15px;
  background: #f0f0f0;
}
.up, .down { border: 4px solid transparent; }
.up { border-top: 0; border-bottom-color: #333; margin: 7px 0; }
.down { border-bottom: 0; border-top-color: #333; margin: auto 0 6px; }
.thumb {
  display: grid;
  place-items: center;
  width: 15px;
  height: 238px;
  border: 1px solid #8f8f8f;
  border-radius: 2px;
  background: linear-gradient(90deg, #f4f4f4, #dcdce0 50%, #bebec4);
}
.thumb b {
  width: 7px;
  height: 8px;
  background: repeating-linear-gradient(#555, #555 1px, #eee 1px, #eee 3px);
}

/* Windows taskbar */
.taskbar {
  display: flex;
  align-items: center;
  height: 40px;
  border-top: 1px solid #17150f;
  box-shadow: inset 0 1px #85857c;
  background: linear-gradient(90deg, #1a1911, #2a291f 16%, #17160f 34%, #26271b 42%, #3c3021 60%, #4b3424 78%, #5a4436 88%, #39291d 98%);
  color: #fff;
}
.start { width: 58px; padding-left: 7px; }
.task { display: grid; place-items: center; width: 62px; height: 38px; }
.task.on, .task.open { width: 58px; margin: 0 2px; border: 1px solid #8f8d84; border-radius: 2px; }
.task.on { background: linear-gradient(#9a9a96, #c9c9c6 60%, #e0dedb); border-color: #e5e5e5; }
.task.open { background: linear-gradient(135deg, #75756c, #3a392f 50%, #55544a); }
.task.stack { width: 50px; margin-right: 0; }
.edge { width: 3px; height: 38px; border-right: 1px solid #77756c; }
.tray { display: flex; align-items: center; gap: 9px; height: 100%; margin-left: auto; }
.lang { margin-right: 6px; padding-bottom: 6px; }
.tri { border: 4px solid transparent; border-top: 0; border-bottom-color: #fff; margin-right: 5px; }
.tray svg { margin-top: 2px; }
.tray time { width: 72px; text-align: center; line-height: 17px; }
.desk { width: 13px; height: 38px; margin-left: -4px; border: 1px solid #8a8178; background: linear-gradient(160deg, #87807a, #2c2018 50%); }
```
